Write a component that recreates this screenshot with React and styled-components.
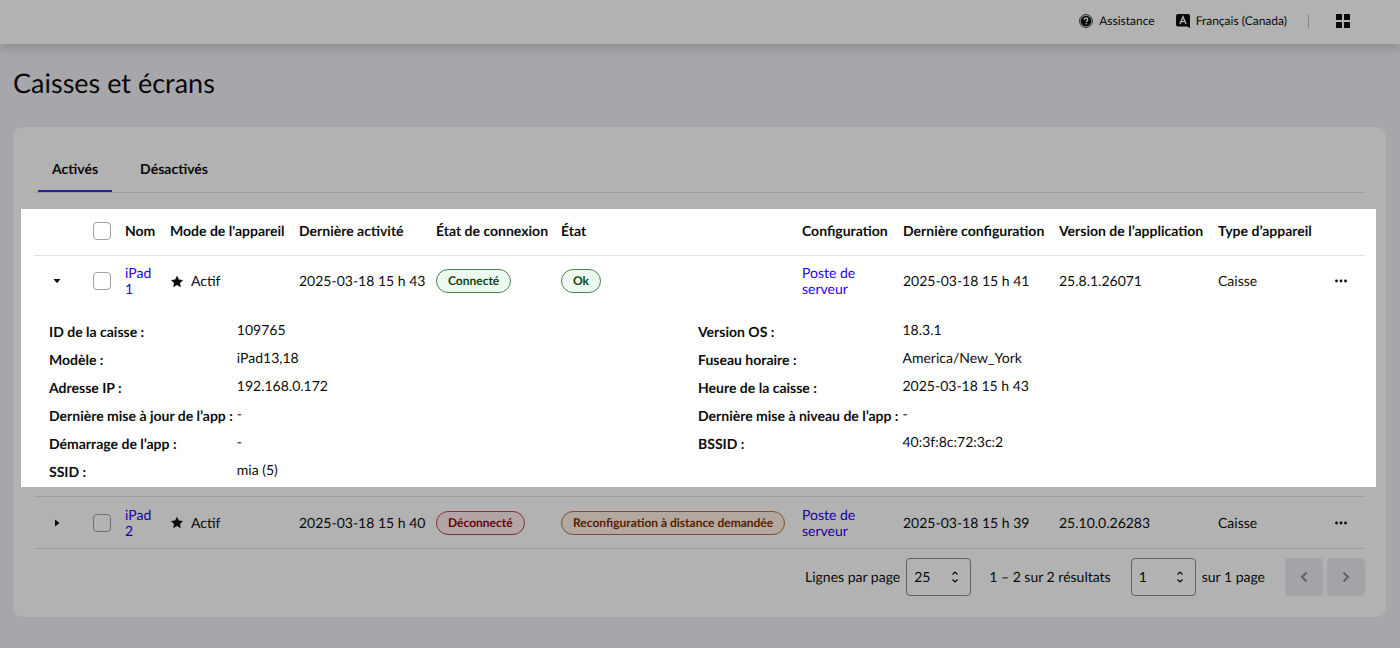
import React, { useState } from 'react';
import styled, { createGlobalStyle, css } from 'styled-components';

const GlobalStyle = createGlobalStyle`
  * {
    box-sizing: border-box;
  }
  body {
    margin: 0;
    min-height: 100vh;
    background-color: #f0f0f5;
    color: #0d0d0d;
    font-family: Lato, 'Open Sans', sans-serif;
    font-size: 14px;
    line-height: 16px;
    text-rendering: geometricPrecision;
  }
  button, select, input {
    font: inherit;
    color: inherit;
    text-rendering: inherit;
  }
`;

const Header = styled.header`
  display: flex;
  align-items: center;
  justify-content: flex-end;
  height: 44px;
  padding: 0 50px 3px 16px;
  background-color: #fff;
  box-shadow: 0 2px 12px rgba(60, 70, 80, 0.3);
  font-size: 12px;
`;

const HeaderButton = styled.button`
  display: flex;
  align-items: center;
  gap: 6px;
  margin-left: ${props => props.$space || 0}px;
  padding: 0;
  border: 0;
  background: none;
  cursor: pointer;
`;

const Divider = styled.span`
  width: 1px;
  height: 14px;
  margin-left: 21px;
  background-color: #b9c3d3;
`;

const Page = styled.main`
  padding: 22px 14px 31px 13px;
`;

const Title = styled.h1`
  margin: 0 0 27px;
  font-size: 27px;
  font-weight: 400;
  line-height: 34px;
`;

const Card = styled.section`
  padding: 16px 21px 21px;
  border-radius: 10px;
  background-color: #fff;
`;

const Tabs = styled.div`
  display: flex;
  gap: 14px;
  padding-left: 4px;
  border-bottom: 1px solid #e2e2e6;
`;

const Tab = styled.button`
  height: 49px;
  padding: 4px 14px 0;
  border: 0;
  border-bottom: 2px solid transparent;
  background: none;
  font-weight: 700;
  cursor: pointer;
  ${props =>
    props.$active &&
    css`
      border-bottom-color: #3a2bf0;
    `}
`;

const TableArea = styled.div`
  position: relative;
  margin-top: 15px;
`;

// Highlighted zone of the guided tour, everything around it is dimmed
const Spotlight = styled.div`
  position: absolute;
  top: 1px;
  left: -13px;
  right: -11px;
  height: 278px;
  box-shadow: 0 0 0 3000px rgba(0, 0, 0, 0.3);
  pointer-events: none;
`;

const Table = styled.table`
  width: 100%;
  table-layout: fixed;
  border-collapse: collapse;
  text-align: left;
`;

const Col = styled.col`
  width: ${props => (props.$w ? `${props.$w}px` : 'auto')};
`;

const Th = styled.th`
  height: 47px;
  padding: 0;
  font-weight: 700;
  white-space: nowrap;
`;

const Row = styled.tr`
  ${props =>
    props.$line &&
    css`
      border-bottom: 1px solid #e2e2e6;
    `}
`;

const Td = styled.td`
  height: 52px;
  padding: 0;
  white-space: ${props => (props.$wrap ? 'normal' : 'nowrap')};
`;

const DetailCell = styled.td`
  padding: 0;
`;

const Checkbox = styled.input`
  display: block;
  width: 18px;
  height: 18px;
  margin: 0;
  appearance: none;
  border: 1px solid #a0a0a0;
  border-radius: 4px;
  background-color: #fff;
  &:checked {
    background-color: #3a2bf0;
  }
`;

const IconButton = styled.button`
  display: flex;
  align-items: center;
  justify-content: center;
  width: 46px;
  height: 24px;
  padding: 0;
  border: 0;
  background: none;
  cursor: pointer;
`;

const Link = styled.a`
  display: block;
  max-width: ${props => props.$w}px;
  color: #2800e8;
  text-decoration: none;
`;

const Mode = styled.span`
  display: flex;
  align-items: center;
  gap: 7px;
`;

const tones = {
  green: ['#edf9ee', '#4f8256', '#0b4413'],
  red: ['#ffecee', '#bb4a53', '#94000f'],
  orange: ['#fff1e4', '#b3714c', '#7f2f00'],
};

const Badge = styled.span`
  display: inline-block;
  padding: 3px 11px;
  border: 1px solid ${props => tones[props.$tone][1]};
  border-radius: 12px;
  background-color: ${props => tones[props.$tone][0]};
  color: ${props => tones[props.$tone][2]};
  font-size: 12px;
  font-weight: 700;
`;

const Details = styled.div`
  display: grid;
  grid-template-columns: 1fr 1fr;
  align-items: start;
  padding: 15px 18px 16px 15px;
`;

const DetailList = styled.dl`
  display: grid;
  grid-template-columns: max-content 1fr;
  grid-auto-rows: 18px;
  gap: 10px 4px;
  margin: 0;
`;

const Term = styled.dt`
  font-weight: 700;
  line-height: 20px;
`;

const Value = styled.dd`
  margin: 0;
`;

const Pagination = styled.div`
  display: flex;
  align-items: center;
  justify-content: flex-end;
  padding-top: 9px;
`;

const PageLabel = styled.label`
  display: flex;
  align-items: center;
  gap: 6px;
  margin-right: ${props => props.$space || 21}px;
`;

const SelectBox = styled.span`
  display: grid;
  align-items: center;
  width: 65px;
  height: 38px;
  > * {
    grid-area: 1 / 1;
  }
  svg {
    justify-self: end;
    margin-right: 12px;
    pointer-events: none;
  }
`;

const Select = styled.select`
  width: 100%;
  height: 100%;
  padding: 0 7px;
  appearance: none;
  border: 1px solid #8c8c8c;
  border-radius: 4px;
  background-color: #fff;
`;

const PageButton = styled.button`
  display: flex;
  align-items: center;
  justify-content: center;
  width: 38px;
  height: 38px;
  margin-left: ${props => props.$space || 0}px;
  padding: 0;
  border: 0;
  border-radius: 4px;
  background-color: #ebebf1;
  color: #8c8c8c;
`;

const HelpIcon = () => (
  <svg width="14" height="14" viewBox="0 0 14 14" fill="none">
    <circle cx="7" cy="7" r="6.4" stroke="#333" strokeWidth="1" />
    <circle cx="7" cy="7" r="5.3" fill="#0d0d0d" />
    <path d="M5.2 5.7C5.2 4.5 6 4 7 4s1.8.6 1.8 1.5C8.8 6.7 7.2 6.7 7.2 8" stroke="#fff" strokeWidth="1.3" />
    <circle cx="7.2" cy="9.8" r="0.8" fill="#fff" />
  </svg>
);

const LanguageIcon = () => (
  <svg width="14" height="14" viewBox="0 0 14 14">
    <path d="M2 0h10a2 2 0 0 1 2 2v12l-3-1.5H2a2 2 0 0 1-2-2V2a2 2 0 0 1 2-2z" fill="#0d0d0d" />
    <path d="M4 10l3-7.2L10 10M5 7.6h4" stroke="#fff" strokeWidth="1.4" fill="none" />
  </svg>
);

const AppsIcon = () => (
  <svg width="14" height="14" viewBox="0 0 14 14" fill="#0d0d0d">
    <rect width="6" height="6" rx="0.6" />
    <rect x="8" width="6" height="6" rx="0.6" />
    <rect y="8" width="6" height="6" rx="0.6" />
    <rect x="8" y="8" width="6" height="6" rx="0.6" />
  </svg>
);

const CaretIcon = ({ open }) => (
  <svg width="8" height="8" viewBox="0 0 8 8" fill="#0d0d0d">
    <path d={open ? 'M0.5 2h7L4 6.3z' : 'M2 0.5v7L6.5 4z'} />
  </svg>
);

const StarIcon = () => (
  <svg width="14" height="13" viewBox="0 0 14 13" fill="#0d0d0d">
    <path d="M7 .7l1.9 3.9 4.1.5-3 2.900.8 4.200L7 10.100l-3.800 2.100.8-4.200-3-2.900 4.100-.5z" />
  </svg>
);

const DotsIcon = () => (
  <svg width="12" height="4" viewBox="0 0 12 4" fill="#0d0d0d">
    <circle cx="1.5" cy="2" r="1.4" />
    <circle cx="6" cy="2" r="1.4" />
    <circle cx="10.5" cy="2" r="1.4" />
  </svg>
);

const SortIcon = () => (
  <svg width="8" height="12" viewBox="0 0 8 12" fill="none" stroke="#0d0d0d" strokeWidth="1.2">
    <path d="M1.5 3.5L4 1l2.5 2.5M1.5 8.5L4 11l2.5-2.5" />
  </svg>
);

const ArrowIcon = ({ d }) => (
  <svg width="10" height="12" viewBox="0 0 10 12" fill="none" stroke="currentColor" strokeWidth="2">
    <path d={d} />
  </svg>
);

const columns = [
  'Nom',
  "Mode de l'appareil",
  'Dernière activité',
  'État de connexion',
  'État',
  'Configuration',
  'Dernière configuration',
  'Version de l’application',
  'Type d’appareil',
];

const widths = [59, 32, 45, 129, 137, 125, 0, 101, 156, 159, 100, 47];

const devices = [
  {
    name: 'iPad 1',
    activity: '2025-03-18 15 h 43',
    connection: ['green', 'Connecté'],
    state: ['green', 'Ok'],
    configured: '2025-03-18 15 h 41',
    version: '25.8.1.26071',
    details: [
      [
        ['ID de la caisse', '109765'],
        ['Modèle', 'iPad13,18'],
        ['Adresse IP', '192.168.0.172'],
        ['Dernière mise à jour de l’app', '-'],
        ['Démarrage de l’app', '-'],
        ['SSID', 'mia (5)'],
      ],
      [
        ['Version OS', '18.3.1'],
        ['Fuseau horaire', 'America/New_York'],
        ['Heure de la caisse', '2025-03-18 15 h 43'],
        ['Dernière mise à niveau de l’app', '-'],
        ['BSSID', '40:3f:8c:72:3c:2'],
      ],
    ],
  },
  {
    name: 'iPad 2',
    activity: '2025-03-18 15 h 40',
    connection: ['red', 'Déconnecté'],
    state: ['orange', 'Reconfiguration à distance demandée'],
    configured: '2025-03-18 15 h 39',
    version: '25.10.0.26283',
  },
];

const DeviceRow = ({ device }) => {
  const [open, setOpen] = useState(Boolean(device.details));
  const showDetails = open && device.details;

  return (
    <>
      <Row $line={!showDetails}>
        <Td>
          <IconButton aria-label="Détails" aria-expanded={open} onClick={() => setOpen(!open)}>
            <CaretIcon open={open} />
          </IconButton>
        </Td>
        <Td>
          <Checkbox type="checkbox" aria-label={device.name} />
        </Td>
        <Td $wrap>
          <Link href="#" $w={34}>{device.name}</Link>
        </Td>
        <Td>
          <Mode><StarIcon />Actif</Mode>
        </Td>
        <Td>{device.activity}</Td>
        <Td>
          <Badge $tone={device.connection[0]}>{device.connection[1]}</Badge>
        </Td>
        <Td>
          <Badge $tone={device.state[0]}>{device.state[1]}</Badge>
        </Td>
        <Td $wrap>
          <Link href="#" $w={70}>Poste de serveur</Link>
        </Td>
        <Td>{device.configured}</Td>
        <Td>{device.version}</Td>
        <Td>Caisse</Td>
        <Td>
          <IconButton aria-label="Actions">
            <DotsIcon />
          </IconButton>
        </Td>
      </Row>
      {showDetails && (
        <Row $line>
          <DetailCell colSpan={12}>
            <Details>
              {device.details.map((list, i) => (
                <DetailList key={i}>
                  {list.map(([label, value]) => (
                    <React.Fragment key={label}>
                      <Term>{label} :</Term>
                      <Value>{value}</Value>
                    </React.Fragment>
                  ))}
                </DetailList>
              ))}
            </Details>
          </DetailCell>
        </Row>
      )}
    </>
  );
};

const App = () => {
  const [tab, setTab] = useState('Activés');

  return (
    <>
      <GlobalStyle />
      <Header>
        <HeaderButton><HelpIcon />Assistance</HeaderButton>
        <HeaderButton $space={21}><LanguageIcon />Français (Canada)</HeaderButton>
        <Divider />
        <HeaderButton $space={27} aria-label="Applications"><AppsIcon /></HeaderButton>
      </Header>
      <Page>
        <Title>Caisses et écrans</Title>
        <Card>
          <Tabs role="tablist">
            {['Activés', 'Désactivés'].map(name => (
              <Tab key={name} role="tab" aria-selected={tab === name} $active={tab === name} onClick={() => setTab(name)}>
                {name}
              </Tab>
            ))}
          </Tabs>
          <TableArea>
            <Table>
              <colgroup>
                {widths.map((w, i) => <Col key={i} $w={w} />)}
              </colgroup>
              <thead>
                <Row $line>
                  <Th />
                  <Th><Checkbox type="checkbox" aria-label="Tout sélectionner" /></Th>
                  {columns.map(name => <Th key={name} scope="col">{name}</Th>)}
                  <Th />
                </Row>
              </thead>
              <tbody>
                {devices.map(device => <DeviceRow key={device.name} device={device} />)}
              </tbody>
            </Table>
            <Spotlight />
          </TableArea>
          <Pagination>
            <PageLabel $space={18}>
              Lignes par page
              <SelectBox>
                <Select defaultValue="25"><option>25</option><option>50</option></Select>
                <SortIcon />
              </SelectBox>
            </PageLabel>
            <PageLabel as="span" $space={20}>1 – 2 sur 2 résultats</PageLabel>
            <PageLabel $space={20}>
              <SelectBox>
                <Select defaultValue="1"><option>1</option></Select>
                <SortIcon />
              </SelectBox>
              sur 1 page
            </PageLabel>
            <PageButton disabled aria-label="Page précédente"><ArrowIcon d="M7.5 1.5L3 6l4.5 4.5" /></PageButton>
            <PageButton $space={4} disabled aria-label="Page suivante"><ArrowIcon d="M2.5 1.5L7 6l-4.500 4.500" /></PageButton>
          </Pagination>
        </Card>
      </Page>
    </>
  );
};

export default App;
